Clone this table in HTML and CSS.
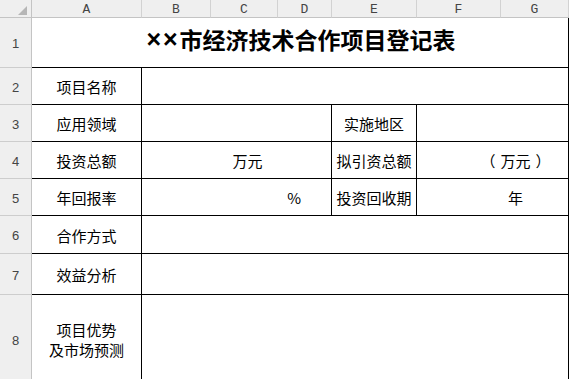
FILE: index.html
```html
<!DOCTYPE html>
<html lang="zh-CN">
<head>
<meta charset="utf-8">
<title>××市经济技术合作项目登记表</title>
<link rel="stylesheet" href="styles.css">
</head>
<body>
<div class="sheet">
  <div class="corner"><span class="tri"></span></div>
  <div class="colh">A</div>
  <div class="colh">B</div>
  <div class="colh">C</div>
  <div class="colh">D</div>
  <div class="colh">E</div>
  <div class="colh">F</div>
  <div class="colh">G</div>

  <div class="rowh">1</div>
  <div class="cell title span-ag"><span class="x">××</span>市经济技术合作项目登记表</div>

  <div class="rowh">2</div>
  <div class="cell label">项目名称</div>
  <div class="cell span-bg"></div>

  <div class="rowh">3</div>
  <div class="cell label">应用领域</div>
  <div class="cell span-bd"></div>
  <div class="cell label">实施地区</div>
  <div class="cell span-fg"></div>

  <div class="rowh">4</div>
  <div class="cell label">投资总额</div>
  <div class="cell span-bd shift-bd">万元</div>
  <div class="cell label">拟引资总额</div>
  <div class="cell span-fg shift-fg"><span class="pl">（</span>万元<span class="pr">）</span></div>

  <div class="rowh">5</div>
  <div class="cell label">年回报率</div>
  <div class="cell span-bd right-bd">%</div>
  <div class="cell label">投资回收期</div>
  <div class="cell span-fg shift-fg">年</div>

  <div class="rowh">6</div>
  <div class="cell label">合作方式</div>
  <div class="cell span-bg"></div>

  <div class="rowh">7</div>
  <div class="cell label">效益分析</div>
  <div class="cell span-bg"></div>

  <div class="rowh">8</div>
  <div class="cell label multi">项目优势<br>及市场预测</div>
  <div class="cell span-bg"></div>
</div>
</body>
</html>
```

FILE: styles.css
```css
html, body {
  margin: 0;
  padding: 0;
  background: #ffffff;
  overflow: hidden;
}

.sheet {
  display: grid;
  grid-template-columns: 32px 110px 69px 67px 54px 85px 84px 68px;
  grid-template-rows: 18px 50px 37px 37px 37px 37px 38px 41px 90px;
  width: 569px;
  font-family: "Noto Sans CJK SC", "Noto Sans", sans-serif;
  font-size: 15px;
  color: #000;
}

.corner {
  position: relative;
  background: #efefef;
  border-right: 1px solid #c4c4c4;
  border-bottom: 1px solid #c4c4c4;
  box-sizing: border-box;
}

.tri {
  position: absolute;
  right: 4px;
  bottom: 2px;
  width: 0;
  height: 0;
  border-left: 9px solid transparent;
  border-bottom: 9px solid #b6b6b6;
}

.colh {
  background: #efefef;
  border-right: 1px solid #d2d2d2;
  border-bottom: 1px solid #c4c4c4;
  box-sizing: border-box;
  display: flex;
  align-items: center;
  justify-content: center;
  font-family: "Liberation Mono", monospace;
  font-size: 13px;
  color: #444;
  padding-top: 1px;
}

.rowh {
  background: #efefef;
  border-right: 1px solid #c4c4c4;
  border-bottom: 1px solid #cdcdcd;
  box-sizing: border-box;
  display: flex;
  align-items: center;
  justify-content: center;
  font-family: "Liberation Sans", sans-serif;
  font-size: 13px;
  color: #444;
  padding-top: 2px;
}

.cell {
  border-right: 1px solid #000;
  border-bottom: 1px solid #000;
  box-sizing: border-box;
  display: flex;
  align-items: center;
  justify-content: center;
  line-height: 20px;
  padding-top: 2px;
}

.title {
  font-size: 23px;
  font-weight: bold;
  padding-top: 0;
  padding-bottom: 7px;
  padding-left: 2px;
}

.x {
  font-family: "Liberation Sans", sans-serif;
  font-size: 25px;
  letter-spacing: 2px;
}

.label {
  text-align: center;
}

.multi {
  padding-top: 0;
}

.pl { margin-right: 5px; }
.pr { margin-left: 5px; }

.span-ag { grid-column: 2 / 9; }
.span-bg { grid-column: 3 / 9; }
.span-bd { grid-column: 3 / 6; }
.span-fg { grid-column: 7 / 9; }

.shift-bd { padding-left: 22px; }
.shift-fg { padding-left: 46px; }
.right-bd { justify-content: flex-end; padding-right: 30px; }
```
